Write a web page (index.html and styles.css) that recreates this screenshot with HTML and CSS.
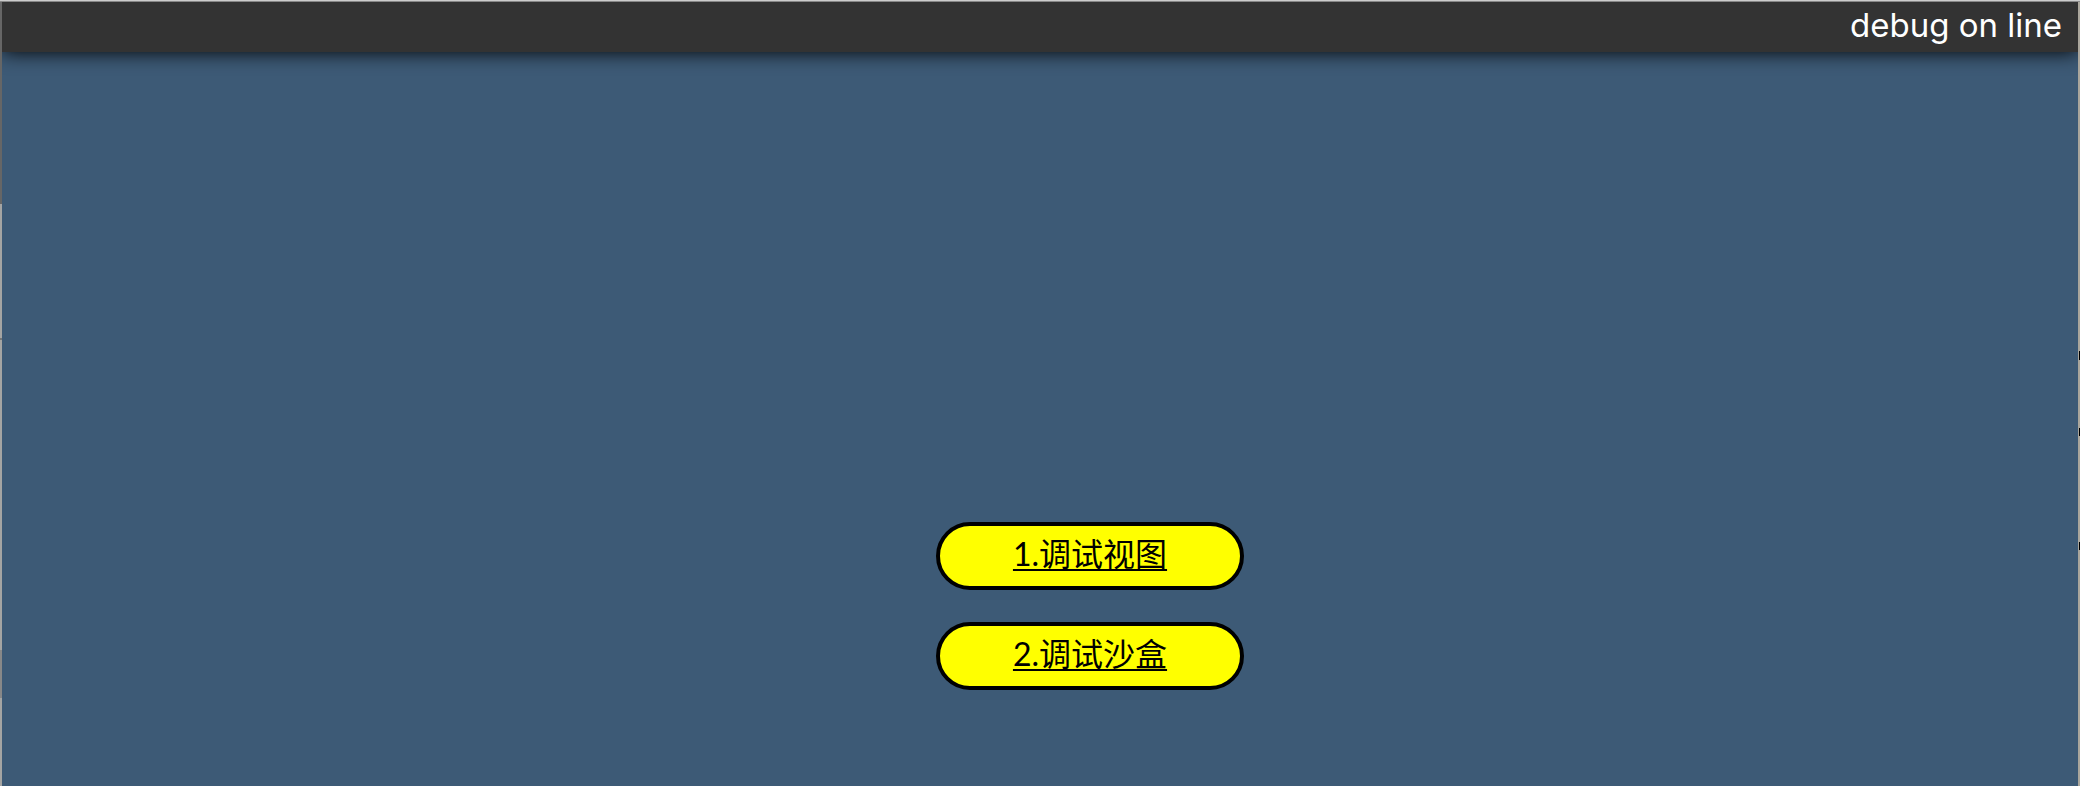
FILE: index.html
```html
<!DOCTYPE html>
<html lang="zh">
<head>
<meta charset="utf-8">
<title>debug on line</title>
<link rel="stylesheet" href="styles.css">
</head>
<body>
<div class="frame">
  <header class="bar"><h1 class="title">debug on line</h1></header>
  <main class="content">
    <nav class="menu">
      <a class="entry" href="#view">1.调试视图</a>
      <a class="entry" href="#sandbox">2.调试沙盒</a>
    </nav>
  </main>
</div>
</body>
</html>
```
FILE: styles.css
```css
* {
  box-sizing: border-box;
}

body {
  margin: 0;
  background:
    linear-gradient(#ccc, #ccc) 0 0 / 100% 1px no-repeat,
    linear-gradient(#888, #888) 0 1px / 100% 1px no-repeat,
    linear-gradient(#666 204px, #a5a5a3 204px 338px, #777 338px 340px, #a5a5a3 340px 650px, #888 650px 698px, #a5a5a3 698px) 0 0 / 2px 100% no-repeat,
    linear-gradient(transparent 351px, #000 351px 360px, transparent 360px 428px, #000 428px 436px, transparent 436px 542px, #000 542px 550px, transparent 550px) 100% 0 / 1px 100% no-repeat,
    #aaa69c;
}

.frame {
  display: flex;
  flex-direction: column;
  min-height: 100vh;
  border: 2px solid transparent;
  border-bottom: 0;
  background: #3d5a76;
  background-clip: padding-box;
  overflow: hidden;
}

.bar {
  display: flex;
  justify-content: flex-end;
  height: 50px;
  padding: 0 16px;
  background: #333;
  box-shadow: 0 0 20px #000;
}

.title {
  margin: 0;
  color: #fff;
  font: 400 33px/46px Inter, "Liberation Sans", sans-serif;
}

.content {
  display: flex;
  flex: 1;
  justify-content: center;
  align-items: flex-end;
  padding: 0 0 96px 100px;
}

.menu {
  display: flex;
  flex-direction: column;
  gap: 32px;
}

.entry {
  width: 308px;
  padding-bottom: 4px;
  border: 4px solid #000;
  border-radius: 34px;
  background: #ff0;
  color: #000;
  font: 400 32px/56px Lato, "Noto Sans CJK SC", sans-serif;
  text-align: center;
  text-decoration: underline;
  text-decoration-thickness: 2px;
  text-underline-offset: 3px;
  text-decoration-skip-ink: none;
}
```
